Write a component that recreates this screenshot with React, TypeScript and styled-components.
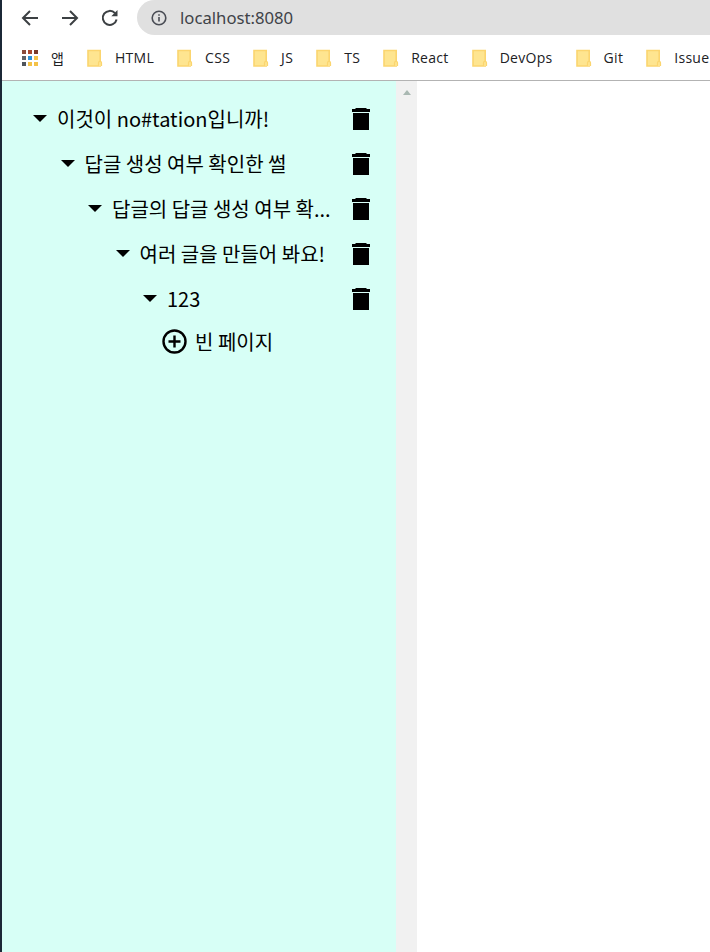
import React from "react";
import styled, { createGlobalStyle } from "styled-components";

type PageNode = {
  title: string;
  children?: PageNode[];
};

const bookmarks = ["HTML", "CSS", "JS", "TS", "React", "DevOps", "Git", "Issue"];

const tree: PageNode = {
  title: "이것이 no#tation입니까!",
  children: [
    {
      title: "답글 생성 여부 확인한 썰",
      children: [
        {
          title: "답글의 답글 생성 여부 확...",
          children: [
            {
              title: "여러 글을 만들어 봐요!",
              children: [{ title: "123" }],
            },
          ],
        },
      ],
    },
  ],
};

const appColors = ["#8a4b3a", "#a8482f", "#7a3a2a", "#5f6368", "#2b8fd6", "#f4c247", "#50555c", "#f4c247", "#f4c247"];

const TreeItem = ({ node, depth }: { node: PageNode; depth: number }) => (
  <>
    <Row $depth={depth}>
      <Caret viewBox="0 0 14 7">
        <path d="M0 0h14L7 7z" />
      </Caret>
      <Title>{node.title}</Title>
      <TrashIcon viewBox="0 0 18 22">
        <path d="M4 0h10l1 1h3v3H0V1h3zM1 5h16v17H1z" />
      </TrashIcon>
    </Row>
    {node.children?.map((child) => (
      <TreeItem key={child.title} node={child} depth={depth + 1} />
    ))}
    {!node.children && (
      <AddRow $depth={depth + 1}>
        <svg width="25" height="25" viewBox="0 0 25 25" fill="none" stroke="#000" strokeWidth="2.4">
          <circle cx="12.5" cy="12.5" r="11" />
          <path d="M12.5 6.5v12M6.5 12.5h12" />
        </svg>
        <span>빈 페이지</span>
      </AddRow>
    )}
  </>
);

const App = () => (
  <>
    <GlobalStyle />
    <Page>
      <Edge />
      <Main>
        <Chrome>
          <AddressRow>
            <NavIcon viewBox="0 0 18 18">
              <path d="M17 9H2M9 2L2 9l7 7" />
            </NavIcon>
            <NavIcon viewBox="0 0 18 18">
              <path d="M1 9h15M9 2l7 7-7 7" />
            </NavIcon>
            <NavIcon viewBox="0 0 18 18">
              <path d="M15.6 10.5A7 7 0 1 1 14 4.2" />
              <path d="M16.5 1v6.2h-6.2z" fill="#3c4043" stroke="none" />
            </NavIcon>
            <Omnibox>
              <svg width="16" height="16" viewBox="0 0 16 16">
                <circle cx="8" cy="8" r="6.8" fill="none" stroke="#4a4d55" strokeWidth="1.6" />
                <path d="M7.2 7h1.6v4.6H7.2zM7.2 4.2h1.6v1.6H7.2z" fill="#4a4d55" />
              </svg>
              <Url>localhost:8080</Url>
            </Omnibox>
          </AddressRow>
          <BookmarkRow>
            <AppsIcon>
              {appColors.map((color, i) => (
                <AppDot key={i} $color={color} />
              ))}
            </AppsIcon>
            <AppsLabel>앱</AppsLabel>
            {bookmarks.map((label) => (
              <Bookmark key={label}>
                <svg width="16" height="18" viewBox="0 0 16 18">
                  <path d="M1 1.5h12.2v15.5H1z" fill="#fee590" stroke="#fbd56f" strokeWidth="1.6" />
                  <path d="M11.5 17v-3.2a1.3 1.3 0 0 1 3 0V17" fill="#fee590" stroke="#fbd56f" strokeWidth="1.2" />
                </svg>
                <span>{label}</span>
              </Bookmark>
            ))}
          </BookmarkRow>
        </Chrome>
        <Content>
          <Sidebar>
            <TreeItem node={tree} depth={0} />
          </Sidebar>
          <Scrollbar>
            <ScrollArrow />
          </Scrollbar>
        </Content>
      </Main>
    </Page>
  </>
);

const GlobalStyle = createGlobalStyle`
  html, body {
    margin: 0;
    padding: 0;
    height: 100%;
    overflow: hidden;
    background: #fff;
  }
`;

const Page = styled.div`
  display: flex;
  width: 710px;
  height: 952px;
  overflow: hidden;
  font-family: "Noto Sans CJK KR", "Noto Sans", sans-serif;
`;

const Edge = styled.div`
  flex: 0 0 2px;
  background: #1b2836;
`;

const Main = styled.div`
  flex: 1;
  min-width: 0;
  display: flex;
  flex-direction: column;
`;

const Chrome = styled.div`
  flex: 0 0 81px;
  box-sizing: border-box;
  border-bottom: 1px solid #b3b3b3;
  background: #fff;
`;

const AddressRow = styled.div`
  display: flex;
  align-items: center;
  height: 35px;
  padding-left: 19px;
  gap: 22px;
`;

const NavIcon = styled.svg`
  flex: none;
  width: 18px;
  height: 18px;
  fill: none;
  stroke: #3c4043;
  stroke-width: 2;
`;

const Omnibox = styled.div`
  display: flex;
  align-items: center;
  flex: none;
  width: 600px;
  height: 35px;
  margin-left: -4px;
  padding-left: 14px;
  gap: 13px;
  background: #e0e0e0;
  border-radius: 18px 0 0 18px;
`;

const Url = styled.span`
  font-family: "Noto Sans", sans-serif;
  font-size: 16.7px;
  color: #3f4348;
`;

const BookmarkRow = styled.div`
  display: flex;
  align-items: center;
  gap: 23px;
  height: 45px;
  padding-left: 20px;
  white-space: nowrap;
  font-family: "Open Sans", "Noto Sans CJK KR", sans-serif;
  font-size: 14px;
  letter-spacing: 0.3px;
  color: #202124;
`;

const AppsIcon = styled.div`
  display: grid;
  grid-template-columns: repeat(3, 4px);
  gap: 2px;
  flex: none;
  margin-right: -10px;
`;

const AppDot = styled.i<{ $color: string }>`
  display: block;
  width: 4px;
  height: 4px;
  background: ${({ $color }) => $color};
`;

const AppsLabel = styled.span`
  font-family: "Noto Sans CJK KR", sans-serif;
  font-size: 14px;
  letter-spacing: 0;
`;

const Bookmark = styled.div`
  display: flex;
  align-items: center;
  flex: none;
  gap: 12px;
`;

const Content = styled.div`
  flex: 1;
  display: flex;
  min-height: 0;
`;

const Sidebar = styled.nav`
  flex: 0 0 394px;
  min-width: 0;
  box-sizing: border-box;
  padding-top: 15px;
  background: #d7fff6;
  color: #000;
  font-size: 20px;
`;

const Scrollbar = styled.div`
  flex: 0 0 21px;
  display: flex;
  justify-content: center;
  padding-top: 9px;
  background: #f1f1f1;
`;

const ScrollArrow = styled.div`
  width: 0;
  height: 0;
  border-left: 4.5px solid transparent;
  border-right: 4.5px solid transparent;
  border-bottom: 5px solid #a9b8b2;
`;

const Row = styled.div<{ $depth: number }>`
  display: flex;
  align-items: center;
  box-sizing: border-box;
  height: 45px;
  padding-left: ${({ $depth }) => 31 + $depth * 27.5}px;
  padding-right: 26px;
`;

const Caret = styled.svg`
  flex: none;
  width: 14px;
  height: 7px;
  margin-right: 10px;
`;

const Title = styled.span`
  flex: 1;
  min-width: 0;
  white-space: nowrap;
`;

const TrashIcon = styled.svg`
  flex: none;
  width: 18px;
  height: 22px;
  margin-left: 20px;
`;

const AddRow = styled.div<{ $depth: number }>`
  display: flex;
  align-items: center;
  gap: 8px;
  height: 40px;
  padding-left: ${({ $depth }) => 22.5 + $depth * 27.5}px;
`;

export default App;
